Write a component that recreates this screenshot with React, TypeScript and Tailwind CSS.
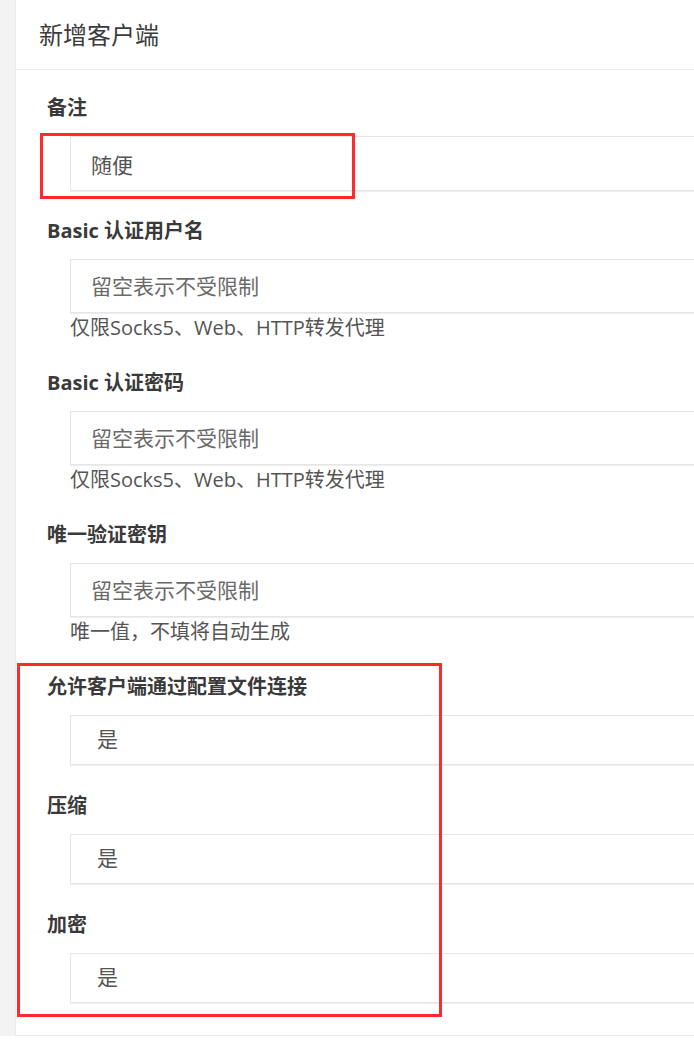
import React from "react";

const font = { fontFamily: '"Open Sans", "Noto Sans CJK SC", sans-serif' };

function Label({ children }: { children: React.ReactNode }) {
  return (
    <div className="h-6 leading-6 text-[20px] font-bold text-[#3a3a3a] whitespace-nowrap">
      {children}
    </div>
  );
}

function TextField({
  label,
  value,
  placeholder,
  help,
  h = "h-[54px]",
}: {
  label: string;
  value?: string;
  placeholder?: string;
  help?: string;
  h?: string;
}) {
  return (
    <div className={help ? "mb-[31px]" : "mb-[28px]"}>
      <Label>{label}</Label>
      <div className="ml-[23px] mt-4">
        <input
          readOnly
          defaultValue={value}
          placeholder={placeholder}
          className={`${h} w-[700px] border border-[#e5e6e7] bg-white pl-[20px] text-[21px] text-[#555] placeholder:text-[#6a6a6a] outline-none shadow-[0_1px_0_#eeeeee]`}
          style={font}
        />
        {help && (
          <div className="mt-[3px] h-6 leading-6 text-[20px] text-[#555] whitespace-nowrap">
            {help}
          </div>
        )}
      </div>
    </div>
  );
}

function SelectField({ label, last }: { label: string; last?: boolean }) {
  return (
    <div className={last ? "" : "mb-[29px]"}>
      <Label>{label}</Label>
      <div className="ml-[23px] mt-4">
        <div className="h-[50px] w-[700px] border border-[#e5e6e7] bg-white pl-[26px] flex items-center text-[21px] text-[#555] shadow-[0_1px_0_#eeeeee]">
          是
        </div>
      </div>
    </div>
  );
}

export default function App() {
  return (
    <div className="relative w-[694px] h-[1042px] overflow-hidden bg-white" style={font}>
      <div className="h-[1036px] bg-[#f3f3f4] pl-[15px]">
        <div className="h-full bg-white border-l border-b border-[#e7eaec]">
          <div className="h-[70px] border-b border-[#e7eaec] flex items-center pl-[23px] text-[24px] text-[#3c3c3c]">
            新增客户端
          </div>
          <div className="pt-[26px] pl-[31px]">
            <TextField label="备注" value="随便" h="h-[55px]" />
            <TextField
              label="Basic 认证用户名"
              placeholder="留空表示不受限制"
              help="仅限Socks5、Web、HTTP转发代理"
            />
            <TextField
              label="Basic 认证密码"
              placeholder="留空表示不受限制"
              help="仅限Socks5、Web、HTTP转发代理"
            />
            <TextField
              label="唯一验证密钥"
              placeholder="留空表示不受限制"
              help="唯一值，不填将自动生成"
            />
            <SelectField label="允许客户端通过配置文件连接" />
            <SelectField label="压缩" />
            <SelectField label="加密" last />
          </div>
        </div>
      </div>
      <div className="absolute left-[40px] top-[133px] w-[315px] h-[66px] border-[3px] border-[#ff2b2b]" />
      <div className="absolute left-[17px] top-[663px] w-[425px] h-[354px] border-[3px] border-[#ff2b2b]" />
    </div>
  );
}
